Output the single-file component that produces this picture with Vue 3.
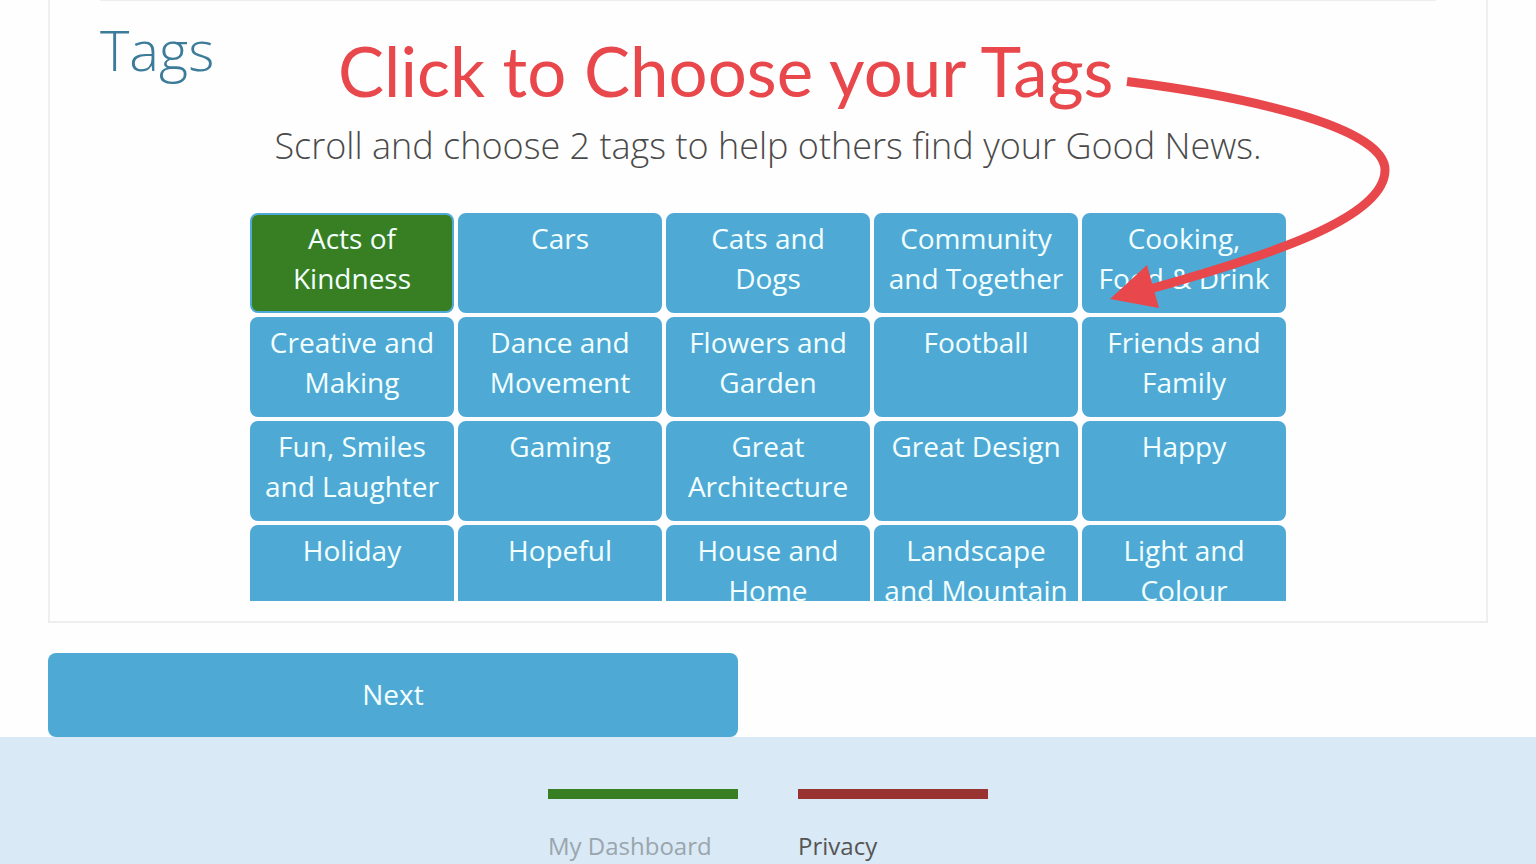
<script setup>
import { ref } from 'vue'

const tags = [
  'Acts of Kindness', 'Cars', 'Cats and Dogs', 'Community and Together', 'Cooking, Food & Drink',
  'Creative and Making', 'Dance and Movement', 'Flowers and Garden', 'Football', 'Friends and Family',
  'Fun, Smiles and Laughter', 'Gaming', 'Great Architecture', 'Great Design', 'Happy',
  'Holiday', 'Hopeful', 'House and Home', 'Landscape and Mountain', 'Light and Colour',
]
const selected = ref(['Acts of Kindness'])

function toggle(tag) {
  if (selected.value.includes(tag)) {
    selected.value = selected.value.filter((t) => t !== tag)
  } else if (selected.value.length < 2) {
    selected.value = [...selected.value, tag]
  }
}
</script>

<template>
  <div class="page">
    <main class="main">
      <section class="panel" aria-labelledby="tags-title">
        <div class="section">
          <h2 id="tags-title" class="title">Tags</h2>
          <p class="hint">Scroll and choose 2 tags to help others find your Good News.</p>
          <div class="tags">
            <button
              v-for="tag in tags"
              :key="tag"
              type="button"
              class="tag"
              :class="{ chosen: selected.includes(tag) }"
              :aria-pressed="selected.includes(tag)"
              @click="toggle(tag)"
            >
              <span>{{ tag }}</span>
            </button>
          </div>
        </div>
        <div class="callout">
          <p class="callout-text">Click to Choose your Tags</p>
          <svg class="arrow" width="300" height="240" viewBox="1100 70 300 240" aria-hidden="true">
            <path d="M1127 81.500C1235 95 1385 125 1385 170C1385 218 1268 256 1150 289" fill="none" stroke="#e8474c" stroke-width="9" />
            <path d="M1110 299L1147 265L1159 308Z" fill="#e8474c" />
          </svg>
        </div>
      </section>
      <button type="button" class="next">Next</button>
    </main>
    <footer class="footer">
      <nav class="links" aria-label="Footer">
        <div class="column green"><a href="#dashboard" class="muted">My Dashboard</a></div>
        <div class="column red"><a href="#privacy">Privacy</a></div>
      </nav>
    </footer>
  </div>
</template>

<style>
html {
  scrollbar-width: none;
}
body {
  margin: 0;
  background: #fefefe;
}
</style>

<style scoped>
.page {
  min-height: 100vh;
  max-height: 100vh;
  display: flex;
  flex-direction: column;
  overflow: hidden;
  font-family: "Open Sans", "Noto Sans", sans-serif;
  color: #4a4a4a;
}
.main {
  padding: 0 48px;
}
.panel {
  position: relative;
  padding: 0 50px 20px;
  border: 2px solid #eeeeee;
  border-top: 0;
}
.section {
  border-top: 1px solid #eeeeee;
}
.title {
  margin: 0;
  padding-top: 8px;
  font-size: 56px;
  line-height: 80px;
  font-weight: 300;
  color: #3c7b99;
}
.hint {
  margin: 32px 0 42px;
  font-size: 36px;
  line-height: 50px;
  font-weight: 300;
  text-align: center;
}
.tags {
  display: grid;
  grid-template-columns: repeat(5, 1fr);
  grid-auto-rows: 100px;
  gap: 4px;
  height: 388px;
  margin: 0 150px;
  overflow-y: auto;
  scrollbar-width: none;
}
.tag {
  display: flex;
  justify-content: center;
  align-items: flex-start;
  padding: 3px 8px;
  border: 2px solid #4eaad5;
  border-radius: 8px;
  background: #4eaad5;
  color: #f4ffff;
  font: 400 28px/40px "Open Sans", "Noto Sans", sans-serif;
  text-align: center;
  cursor: pointer;
}
.tag.chosen {
  background: #377f22;
}
.callout {
  position: absolute;
  top: 0;
  left: 50%;
  width: 860px;
  margin-left: -430px;
  pointer-events: none;
}
.callout-text {
  margin: 0;
  font-family: Lato, "Open Sans", sans-serif;
  font-size: 69px;
  line-height: 142px;
  color: #e8474c;
  white-space: nowrap;
}
.arrow {
  position: absolute;
  top: 70px;
  left: 762px;
}
.next {
  display: block;
  width: calc(50% - 30px);
  margin-top: 30px;
  padding: 21px 22px 23px;
  border: 0;
  border-radius: 8px;
  background: #4eaad5;
  color: #f4ffff;
  font: 400 28px/40px "Open Sans", "Noto Sans", sans-serif;
  cursor: pointer;
}
.footer {
  flex: 1;
  padding-top: 52px;
  background: #d9e9f5;
}
.links {
  display: flex;
  justify-content: center;
  gap: 60px;
}
.column {
  width: 190px;
  padding-top: 29px;
  border-top: 10px solid #377f22;
}
.column.red {
  border-color: #983331;
}
.column a {
  font-size: 24px;
  line-height: 36px;
  color: #555555;
  text-decoration: none;
}
.column a.muted {
  color: #9aa5ad;
}
</style>
